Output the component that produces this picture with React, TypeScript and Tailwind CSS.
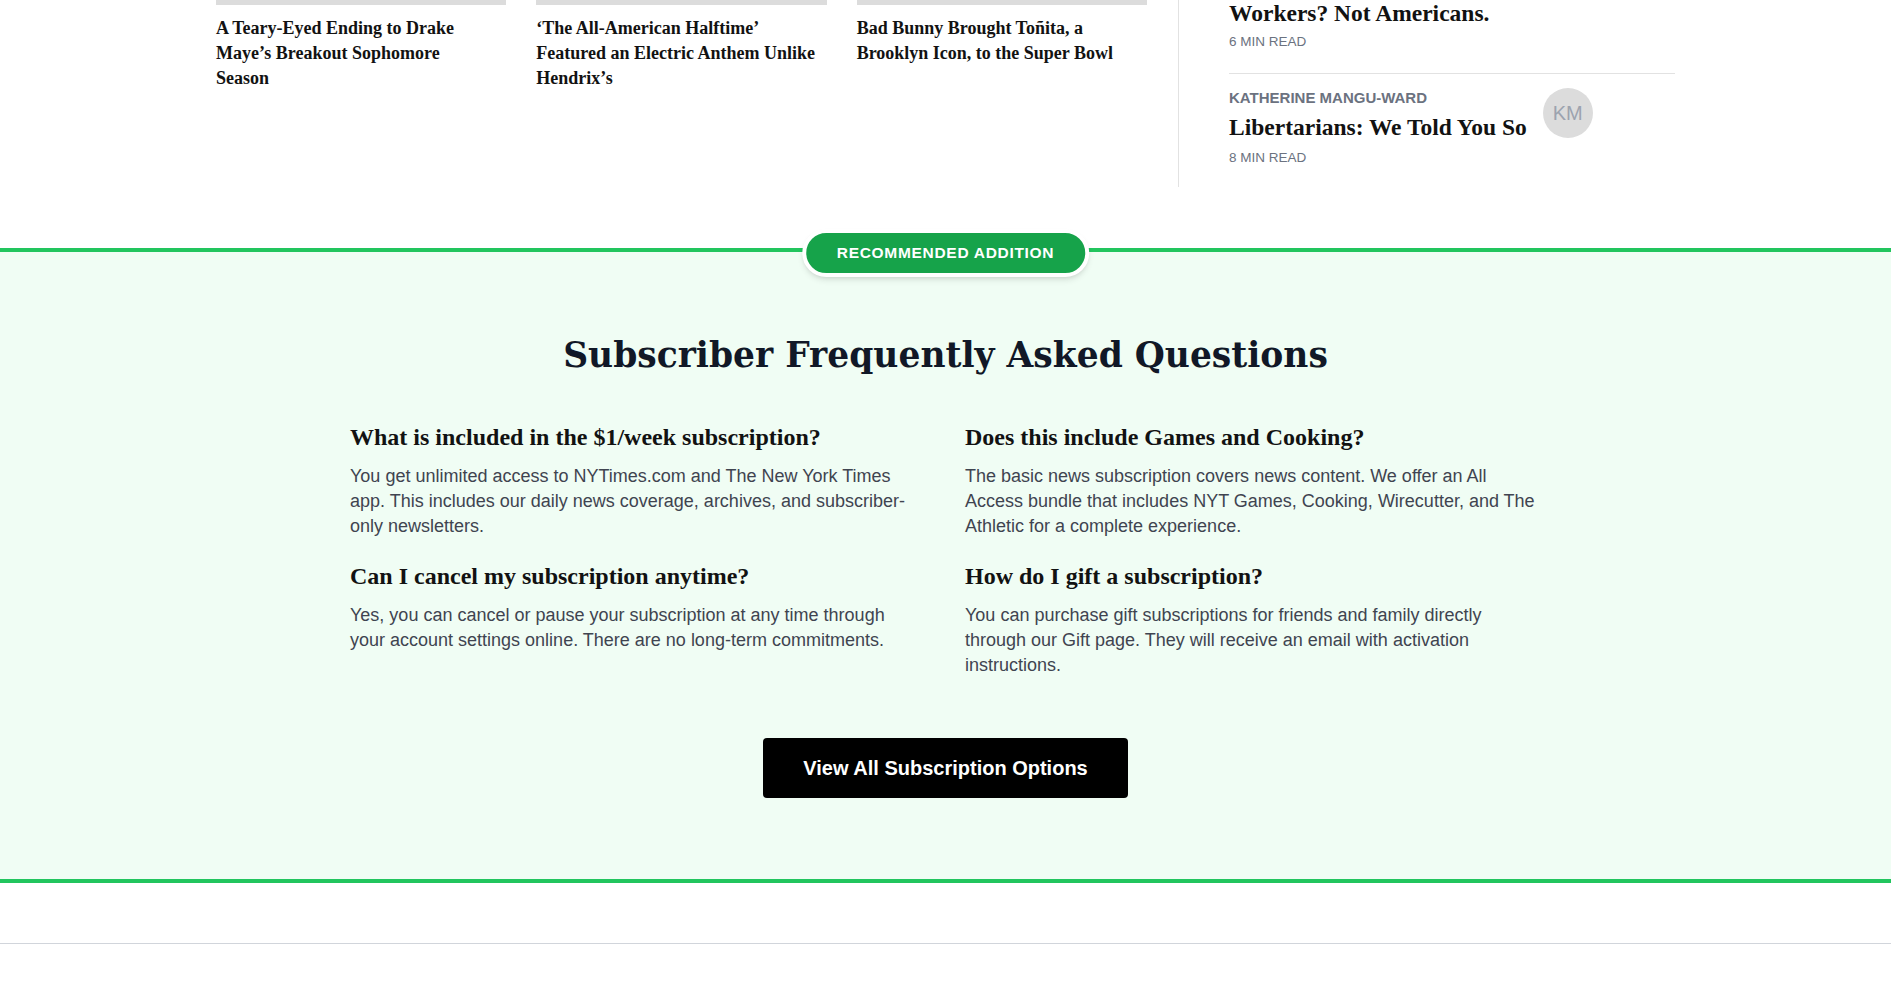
import React from "react";

// card 1 breaks before "Season" in the reference; Playfair runs wider than our serif
const cards = [
  "A Teary-Eyed Ending to Drake Maye’s Breakout Sophomore\nSeason",
  "‘The All-American Halftime’ Featured an Electric Anthem Unlike Hendrix’s",
  "Bad Bunny Brought Toñita, a Brooklyn Icon, to the Super Bowl",
];

const faqs = [
  {
    q: "What is included in the $1/week subscription?",
    a: "You get unlimited access to NYTimes.com and The New York Times app. This includes our daily news coverage, archives, and subscriber-only newsletters.",
  },
  {
    q: "Does this include Games and Cooking?",
    a: "The basic news subscription covers news content. We offer an All Access bundle that includes NYT Games, Cooking, Wirecutter, and The Athletic for a complete experience.",
  },
  {
    q: "Can I cancel my subscription anytime?",
    a: "Yes, you can cancel or pause your subscription at any time through your account settings online. There are no long-term commitments.",
  },
  {
    q: "How do I gift a subscription?",
    a: "You can purchase gift subscriptions for friends and family directly through our Gift page. They will receive an email with activation instructions.",
  },
];

const headFont = "font-['Liberation_Serif',serif]";
const sansFont = "font-['Liberation_Sans',Arial,sans-serif]";

export default function App() {
  return (
    <div className="min-h-screen bg-white">
      {/* top stories strip */}
      <div className="mx-auto flex w-[1459px]">
        <div className="grid w-[931px] grid-cols-3 gap-x-[30px]">
          {cards.map((title) => (
            <div key={title}>
              <div className="h-[5px] bg-[#dcdcdc]" />
              <h3
                className={`${headFont} mt-[11px] whitespace-pre-line text-[18px] font-bold leading-[25px] text-[#121212]`}
              >
                {title}
              </h3>
            </div>
          ))}
        </div>

        <div className="ml-[31px] h-[187px] border-l border-[#e2e2e2] pl-[50px]">
          <div className="w-[446px]">
            <div className="border-b border-[#e2e2e2] pb-[23px]">
              <h3
                className={`${headFont} -mt-[2px] text-[23.5px] font-bold leading-[30px] text-[#121212]`}
              >
                Workers? Not Americans.
              </h3>
              <div
                className={`${sansFont} mt-[6px] text-[13.5px] uppercase leading-[16px] text-[#6b7280]`}
              >
                6 min read
              </div>
            </div>
            <div className="flex items-start gap-4 pt-[14px]">
              <div>
                <div
                  className={`${sansFont} text-[15px] font-bold uppercase leading-[20px] text-[#6b7280]`}
                >
                  Katherine Mangu-Ward
                </div>
                <h3
                  className={`${headFont} mt-[4px] text-[23.5px] font-bold leading-[30px] text-[#121212]`}
                >
                  Libertarians: We Told You So
                </h3>
                <div
                  className={`${sansFont} mt-[8px] text-[13.5px] uppercase leading-[16px] text-[#6b7280]`}
                >
                  8 min read
                </div>
              </div>
              <div
                className={`${sansFont} flex h-[50px] w-[50px] shrink-0 items-center justify-center rounded-full bg-[#dcdcdc] text-[20px] text-[#9ca3af]`}
              >
                KM
              </div>
            </div>
          </div>
        </div>
      </div>

      {/* recommended addition */}
      <section className="relative mt-[61px] border-y-4 border-[#22c55e] bg-[#f0fdf4] pb-[81px] pt-[83px]">
        <div className="absolute left-1/2 top-[-23px] -translate-x-1/2 rounded-full border-4 border-white bg-[#16a34a] px-[31px] py-[9px] shadow-md">
          <span
            className={`${sansFont} block text-[15.5px] font-bold uppercase leading-[22px] tracking-[0.7px] text-white`}
          >
            Recommended Addition
          </span>
        </div>

        <h2 className="text-center font-['DejaVu_Serif',serif] text-[34.5px] font-bold leading-[40px] text-[#111827]">
          Subscriber Frequently Asked Questions
        </h2>

        <div className="mx-auto mt-[46px] w-[1191px]">
          <div className="grid grid-cols-[572px_580px] gap-x-[43px] gap-y-[21px]">
            {faqs.map((f) => (
              <div key={f.q}>
                <h4
                  className={`${headFont} text-[24px] font-bold leading-[32px] text-[#121212]`}
                >
                  {f.q}
                </h4>
                <p
                  className={`${sansFont} mt-[11px] text-[18px] leading-[25px] text-[#3f4450]`}
                >
                  {f.a}
                </p>
              </div>
            ))}
          </div>
        </div>

        <div className="mt-[60px] flex justify-center">
          <button
            className={`${sansFont} h-[60px] w-[365px] rounded-[4px] bg-black text-[20px] font-bold text-white`}
          >
            View All Subscription Options
          </button>
        </div>
      </section>

      <div className="mt-[60px] border-t border-[#d1d5db]" />
    </div>
  );
}
